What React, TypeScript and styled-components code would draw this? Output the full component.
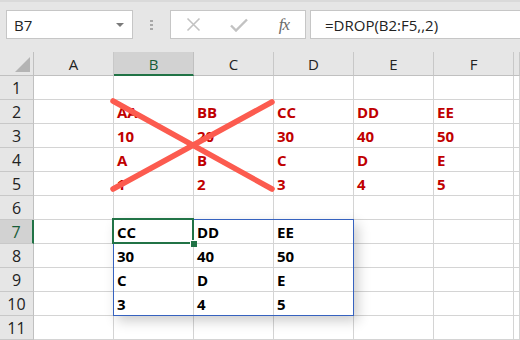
import React from 'react';
import styled, { createGlobalStyle } from 'styled-components';

const COLS = ['A', 'B', 'C', 'D', 'E', 'F'];
const HEAD_W = 34;
const COL_W = 80;
const ROW_H = 24;
const ROW_COUNT = 11;

type Cell = { text: string; tone: 'red' | 'black' };

// row -> col index -> value
const data: Record<number, Record<number, Cell>> = {
  2: { 1: { text: 'AA', tone: 'red' }, 2: { text: 'BB', tone: 'red' }, 3: { text: 'CC', tone: 'red' }, 4: { text: 'DD', tone: 'red' }, 5: { text: 'EE', tone: 'red' } },
  3: { 1: { text: '10', tone: 'red' }, 2: { text: '20', tone: 'red' }, 3: { text: '30', tone: 'red' }, 4: { text: '40', tone: 'red' }, 5: { text: '50', tone: 'red' } },
  4: { 1: { text: 'A', tone: 'red' }, 2: { text: 'B', tone: 'red' }, 3: { text: 'C', tone: 'red' }, 4: { text: 'D', tone: 'red' }, 5: { text: 'E', tone: 'red' } },
  5: { 1: { text: '1', tone: 'red' }, 2: { text: '2', tone: 'red' }, 3: { text: '3', tone: 'red' }, 4: { text: '4', tone: 'red' }, 5: { text: '5', tone: 'red' } },
  7: { 1: { text: 'CC', tone: 'black' }, 2: { text: 'DD', tone: 'black' }, 3: { text: 'EE', tone: 'black' } },
  8: { 1: { text: '30', tone: 'black' }, 2: { text: '40', tone: 'black' }, 3: { text: '50', tone: 'black' } },
  9: { 1: { text: 'C', tone: 'black' }, 2: { text: 'D', tone: 'black' }, 3: { text: 'E', tone: 'black' } },
  10: { 1: { text: '3', tone: 'black' }, 2: { text: '4', tone: 'black' }, 3: { text: '5', tone: 'black' } },
};

const GlobalStyle = createGlobalStyle`
  html, body {
    margin: 0;
    padding: 0;
    background: #ffffff;
    overflow: hidden;
  }
  body {
    font-family: 'Open Sans', 'Noto Sans', sans-serif;
  }
`;

const Window = styled.div`
  width: 520px;
  height: 340px;
  display: flex;
  flex-direction: column;
  overflow: hidden;
`;

const Toolbar = styled.div`
  height: 52px;
  flex-shrink: 0;
  display: flex;
  align-items: flex-start;
  padding: 8px 0 0 6px;
  box-sizing: border-box;
  background: #e6e6e6;
  border-top: 2px solid #dadada;
`;

const NameBox = styled.div`
  width: 127px;
  height: 29px;
  box-sizing: border-box;
  display: flex;
  align-items: center;
  justify-content: space-between;
  padding: 0 8px 0 7px;
  background: #ffffff;
  border: 1px solid #c6c6c6;
  font-size: 15px;
  color: #222222;
`;

const DropArrow = styled.span`
  width: 0;
  height: 0;
  border-left: 4px solid transparent;
  border-right: 4px solid transparent;
  border-top: 4px solid #7a7a7a;
`;

const Grip = styled.div`
  width: 37px;
  height: 29px;
  display: flex;
  flex-direction: column;
  align-items: center;
  justify-content: center;
  gap: 2px;
`;

const GripDot = styled.span`
  width: 3px;
  height: 2px;
  background: #a8a8a8;
`;

const FormulaButtons = styled.div`
  width: 136px;
  height: 29px;
  box-sizing: border-box;
  display: flex;
  align-items: center;
  background: #ffffff;
  border: 1px solid #c6c6c6;
`;

const ToolButton = styled.div<{ $w: number }>`
  width: ${(p) => p.$w}px;
  display: flex;
  justify-content: center;
  align-items: center;
`;

const FxLabel = styled.span`
  font-family: 'Liberation Serif', serif;
  font-style: italic;
  font-size: 17px;
  color: #6a6a6a;
  letter-spacing: -1px;
`;

const FormulaInput = styled.div`
  flex: 1;
  height: 29px;
  margin-left: 4px;
  box-sizing: border-box;
  display: flex;
  align-items: center;
  padding-left: 14px;
  background: #ffffff;
  border: 1px solid #c6c6c6;
  border-right: none;
  font-size: 15px;
  color: #222222;
`;

const Sheet = styled.div`
  position: relative;
  display: grid;
  grid-template-columns: ${HEAD_W}px repeat(${COLS.length}, ${COL_W}px) 1fr;
  grid-auto-rows: ${ROW_H}px;
  background: #ffffff;
`;

const Corner = styled.div`
  position: relative;
  background: #e6e6e6;
  border-right: 1px solid #c0c0c0;
  border-bottom: 1px solid #c0c0c0;
  box-sizing: border-box;

  &::after {
    content: '';
    position: absolute;
    right: 3px;
    bottom: 3px;
    width: 0;
    height: 0;
    border-left: 15px solid transparent;
    border-bottom: 15px solid #b4b4b4;
  }
`;

const ColHead = styled.div<{ $active?: boolean }>`
  display: flex;
  align-items: center;
  justify-content: center;
  box-sizing: border-box;
  padding-top: 1px;
  background: ${(p) => (p.$active ? '#d2d2d2' : '#e6e6e6')};
  border-right: 1px solid ${(p) => (p.$active ? '#c0c0c0' : '#c8c8c8')};
  border-bottom: ${(p) => (p.$active ? '2px solid #217346' : '1px solid #c0c0c0')};
  color: ${(p) => (p.$active ? '#185c37' : '#222222')};
  font-size: 15px;
`;

const RowHead = styled.div<{ $active?: boolean }>`
  display: flex;
  align-items: center;
  justify-content: center;
  box-sizing: border-box;
  background: ${(p) => (p.$active ? '#d2d2d2' : '#e6e6e6')};
  border-right: ${(p) => (p.$active ? '2px solid #217346' : '1px solid #c0c0c0')};
  border-bottom: 1px solid #c8c8c8;
  color: ${(p) => (p.$active ? '#185c37' : '#222222')};
  font-size: 16px;
`;

const GridCell = styled.div<{ $tone?: 'red' | 'black' }>`
  display: flex;
  align-items: center;
  box-sizing: border-box;
  padding: 1px 0 0 3px;
  border-right: 1px solid #d4d4d4;
  border-bottom: 1px solid #d4d4d4;
  font-weight: 700;
  font-size: 15px;
  color: ${(p) => (p.$tone === 'red' ? '#c00000' : '#000000')};
`;

const SpillRange = styled.div`
  position: absolute;
  box-sizing: border-box;
  border: 1px solid #3662bf;
  box-shadow: 4px 5px 12px rgba(0, 0, 0, 0.2);
  pointer-events: none;
`;

const ActiveCell = styled.div`
  position: absolute;
  box-sizing: border-box;
  border: 2px solid #217346;
  pointer-events: none;

  &::after {
    content: '';
    position: absolute;
    right: -5px;
    bottom: -5px;
    width: 6px;
    height: 6px;
    background: #217346;
    border: 1px solid #ffffff;
    border-width: 1px 0 0 1px;
  }
`;

const CrossMark = styled.svg`
  position: absolute;
  left: 0;
  top: 0;
  pointer-events: none;
`;

const cellLeft = (col: number) => HEAD_W + col * COL_W - 1;
const rowTop = (row: number) => row * ROW_H - 1;

const App = () => {
  const rows = Array.from({ length: ROW_COUNT }, (_, i) => i + 1);
  // last column (G) is cut off by the window edge, its label lies off-screen
  const cols = [...COLS, ''];
  return (
    <Window>
      <GlobalStyle />
      <Toolbar>
        <NameBox>
          <span>B7</span>
          <DropArrow />
        </NameBox>
        <Grip>
          <GripDot />
          <GripDot />
          <GripDot />
        </Grip>
        <FormulaButtons>
          <ToolButton $w={44}>
            <svg width="15" height="15" viewBox="0 0 15 15">
              <path d="M1.5 1.5 L13.5 13.5 M13.5 1.5 L1.5 13.5" stroke="#c2c2c2" strokeWidth="1.6" fill="none" />
            </svg>
          </ToolButton>
          <ToolButton $w={48}>
            <svg width="18" height="14" viewBox="0 0 18 14">
              <path d="M1 7.5 L6 12.5 L17 1.5" stroke="#c2c2c2" strokeWidth="2.4" fill="none" />
            </svg>
          </ToolButton>
          <ToolButton $w={42}>
            <FxLabel>fx</FxLabel>
          </ToolButton>
        </FormulaButtons>
        <FormulaInput>=DROP(B2:F5,,2)</FormulaInput>
      </Toolbar>
      <Sheet>
        <Corner />
        {cols.map((c, i) => (
          <ColHead key={i} $active={c === 'B'}>
            {c}
          </ColHead>
        ))}
        {rows.map((r) => (
          <React.Fragment key={r}>
            <RowHead $active={r === 7}>{r}</RowHead>
            {cols.map((c, ci) => {
              const cell = data[r]?.[ci];
              return (
                <GridCell key={ci} $tone={cell?.tone}>
                  {cell?.text}
                </GridCell>
              );
            })}
          </React.Fragment>
        ))}
        <SpillRange
          style={{ left: cellLeft(1), top: rowTop(7), width: COL_W * 3 + 1, height: ROW_H * 4 + 1 }}
        />
        <ActiveCell style={{ left: cellLeft(1) - 1, top: rowTop(7) - 1, width: COL_W + 2, height: ROW_H + 2 }} />
        <CrossMark width="520" height="300">
          <path
            d="M113 49 L272 137 M113 137 L272 50"
            stroke="#fc5b4f"
            strokeWidth="5.5"
            strokeLinecap="round"
            fill="none"
          />
        </CrossMark>
      </Sheet>
    </Window>
  );
};

export default App;
